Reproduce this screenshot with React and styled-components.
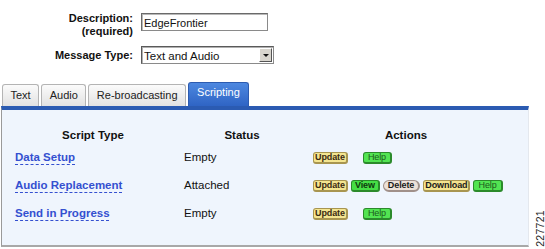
import React from 'react';
import styled, { createGlobalStyle } from 'styled-components';

const GlobalStyle = createGlobalStyle`
  html, body {
    margin: 0;
    padding: 0;
    background: #ffffff;
    font-family: 'Liberation Sans', Arial, sans-serif;
    color: #111111;
  }
`;

const scripts = [
  { name: 'Data Setup', status: 'Empty', actions: ['update', 'help'] },
  {
    name: 'Audio Replacement',
    status: 'Attached',
    actions: ['update', 'view', 'delete', 'download', 'help']
  },
  { name: 'Send in Progress', status: 'Empty', actions: ['update', 'help'] }
];

const actionLabels = {
  update: 'Update',
  view: 'View',
  delete: 'Delete',
  download: 'Download',
  help: 'Help'
};

const tabs = ['Text', 'Audio', 'Re-broadcasting', 'Scripting'];

const App = () => (
  <Page>
    <GlobalStyle />
    <Form>
      <FieldLabel>
        Description:
        <br />
        (required)
      </FieldLabel>
      <TextInput>EdgeFrontier</TextInput>
      <FieldLabel center>Message Type:</FieldLabel>
      <SelectBox>
        <SelectValue>Text and Audio</SelectValue>
        <SelectArrow />
      </SelectBox>
    </Form>

    <TabBar>
      {tabs.map(tab => (
        <Tab key={tab} active={tab === 'Scripting'}>
          {tab}
        </Tab>
      ))}
    </TabBar>

    <PanelRow>
      <Panel>
        <ScriptTable>
          <HeadCell>Script Type</HeadCell>
          <HeadCell>Status</HeadCell>
          <HeadCell>Actions</HeadCell>
          {scripts.map(script => (
            <React.Fragment key={script.name}>
              <Cell>
                <ScriptLink>{script.name}</ScriptLink>
              </Cell>
              <Cell>{script.status}</Cell>
              <ActionCell>
                {script.actions.map(action => (
                  <ActionButton
                    key={action}
                    kind={action}
                    spaced={action === 'help' && script.actions.length === 2}
                  >
                    {actionLabels[action]}
                  </ActionButton>
                ))}
              </ActionCell>
            </React.Fragment>
          ))}
        </ScriptTable>
      </Panel>
      <FigureId>227721</FigureId>
    </PanelRow>
  </Page>
);

export default App;

const Page = styled.div`
  width: 545px;
  height: 249px;
  overflow: hidden;
  padding-top: 12px;
  box-sizing: border-box;
`;

const Form = styled.div`
  display: grid;
  grid-template-columns: 133px auto;
  column-gap: 8px;
  row-gap: 8px;
  align-items: start;
  justify-content: start;
`;

const FieldLabel = styled.div`
  text-align: right;
  font-weight: bold;
  font-size: 11px;
  line-height: 13px;
  color: #111;
  align-self: ${props => (props.center ? 'center' : 'start')};
`;

const TextInput = styled.div`
  width: 127px;
  height: 18px;
  margin-top: 1px;
  box-sizing: border-box;
  border: 1px solid #8a8a8a;
  border-top-color: #6a6a6a;
  border-left-color: #6a6a6a;
  box-shadow: inset 1px 1px 0 #b8b8b8;
  padding: 2px 2px 0;
  font-size: 11px;
  line-height: 14px;
  background: #fff;
`;

const SelectBox = styled.div`
  width: 133px;
  height: 18px;
  box-sizing: border-box;
  border: 1px solid #8a8a8a;
  border-top-color: #5a5a5a;
  border-left-color: #5a5a5a;
  box-shadow: inset 1px 1px 0 #b0b0b0;
  display: flex;
  align-items: stretch;
  background: #fff;
`;

const SelectValue = styled.div`
  flex: 1;
  padding: 2px 2px 0;
  font-size: 11.5px;
  line-height: 14px;
`;

const SelectArrow = styled.div`
  width: 13px;
  margin: 1px;
  box-sizing: border-box;
  background: #d8d5ce;
  border: 1px solid #fff;
  border-right-color: #555;
  border-bottom-color: #555;
  display: flex;
  align-items: center;
  justify-content: center;

  &:after {
    content: '';
    border-left: 3px solid transparent;
    border-right: 3px solid transparent;
    border-top: 3px solid #111;
    margin-top: 1px;
  }
`;

const TabBar = styled.div`
  display: flex;
  align-items: flex-end;
  gap: 2px;
  margin-top: 18px;
  padding-left: 2px;
  height: 24px;
`;

const Tab = styled.div`
  height: ${props => (props.active ? '24px' : '22px')};
  box-sizing: border-box;
  padding: 0 ${props => (props.active ? '8px' : '7.5px')};
  border: 1px solid ${props => (props.active ? '#2c5bb0' : '#b4b4b4')};
  border-bottom: none;
  border-radius: 3px 3px 0 0;
  background: ${props =>
    props.active
      ? 'linear-gradient(#4d88e0, #2f64c4)'
      : 'linear-gradient(#fbfbfb, #e2e2e2)'};
  color: ${props => (props.active ? '#ffffff' : '#222222')};
  font-size: 11px;
  line-height: ${props => (props.active ? '19px' : '20px')};
`;

const PanelRow = styled.div`
  display: flex;
  align-items: flex-end;
`;

const Panel = styled.div`
  width: 528px;
  height: 141px;
  box-sizing: border-box;
  background: #eff5fd;
  border-top: 4px solid #2b5bb2;
  border-left: 1px solid #9a9a9a;
  border-bottom: 2px solid #a8a8a8;
  border-right: 1px solid #e4e8ee;
  margin-left: 1px;
  padding: 19px 0 0 13px;
`;

const ScriptTable = styled.div`
  display: grid;
  grid-template-columns: 156px 116px 186px;
  column-gap: 13px;
  grid-auto-rows: 28px;
  grid-template-rows: 22px;
  align-items: start;
`;

const HeadCell = styled.div`
  text-align: center;
  font-weight: bold;
  font-size: 11.5px;
  line-height: 13px;
`;

const Cell = styled.div`
  font-size: 11.5px;
  line-height: 13px;
`;

const ScriptLink = styled.span`
  color: #3450d0;
  font-weight: bold;
  text-decoration: underline dashed #3450d0;
  text-underline-offset: 3px;
  text-decoration-thickness: 1px;
  cursor: pointer;
`;

const ActionCell = styled.div`
  display: flex;
  align-items: center;
  gap: 3px;
  height: 13px;
`;

const buttonColors = {
  update: { bg: '#f4e590', border: '#a89550', text: '#3a2a10' },
  download: { bg: '#f4e590', border: '#a89550', text: '#1a1a1a' },
  view: { bg: '#45de45', border: '#2b8a2b', text: '#0e3a0e' },
  help: { bg: '#52e452', border: '#2b8a2b', text: '#1c5a1c' },
  delete: { bg: '#ece0d8', border: '#a0908a', text: '#1a1a1a' }
};

const buttonPadding = {
  update: '1px',
  download: '1px',
  view: '3px',
  help: '4px',
  delete: '4px'
};

const ActionButton = styled.span`
  display: inline-block;
  height: 12px;
  box-sizing: border-box;
  padding: 0 ${props => buttonPadding[props.kind]};
  margin-left: ${props => (props.spaced ? '12px' : '0')};
  background: ${props => buttonColors[props.kind].bg};
  border: 1px solid ${props => buttonColors[props.kind].border};
  border-right-width: 2px;
  border-bottom-width: 2px;
  border-radius: ${props => (props.kind === 'delete' ? '6px' : '3px')};
  color: ${props => buttonColors[props.kind].text};
  font-size: 9px;
  font-weight: ${props => (props.kind === 'help' ? 'normal' : 'bold')};
  line-height: 9px;
  letter-spacing: -0.1px;
  cursor: pointer;
`;

const FigureId = styled.div`
  writing-mode: vertical-rl;
  transform: rotate(180deg);
  font-size: 10.5px;
  line-height: 10px;
  letter-spacing: 0.3px;
  color: #222;
  margin-left: 6px;
  margin-bottom: 0;
`;
